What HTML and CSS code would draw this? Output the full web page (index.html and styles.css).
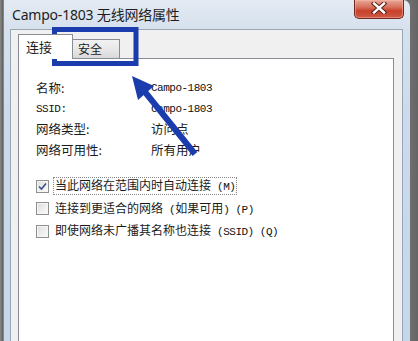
FILE: index.html
```html
<!DOCTYPE html>
<html lang="zh-CN">
<head>
<meta charset="utf-8">
<title>Campo-1803 无线网络属性</title>
<link rel="stylesheet" href="styles.css">
</head>
<body>
<div class="screen">
  <div class="window">
    <div class="titlebar">
      <span class="title">Campo-1803 无线网络属性</span>
      <div class="close">
        <svg width="16" height="12" viewBox="0 0 16 12">
          <path d="M3 1.5 L13 10.5 M13 1.5 L3 10.5" stroke="#5a2018" stroke-width="4.4" stroke-linecap="square" fill="none"/>
          <path d="M3 1.5 L13 10.5 M13 1.5 L3 10.5" stroke="#ffffff" stroke-width="2.4" stroke-linecap="square" fill="none"/>
        </svg>
      </div>
    </div>
    <div class="dialog">
      <div class="tabs">
        <div class="tab tab-active">连接</div>
        <div class="tab">安全</div>
      </div>
      <div class="panel">
        <div class="info">
          <span>名称:</span><span class="mono">Campo-1803</span>
          <span class="mono">SSID:</span><span class="mono">Campo-1803</span>
          <span>网络类型:</span><span>访问点</span>
          <span>网络可用性:</span><span>所有用户</span>
        </div>
        <div class="options">
          <div class="option">
            <span class="box box-checked">
              <svg width="9" height="9" viewBox="0 0 9 9"><path d="M1 4.5 L3.5 7 L8 1.5" stroke="#3b4f8a" stroke-width="1.6" fill="none"/></svg>
            </span>
            <span class="label label-focus">当此网络在范围内时自动连接<span class="mono"> (M)</span></span>
          </div>
          <div class="option">
            <span class="box"></span>
            <span class="label">连接到更适合的网络<span class="mono"> (</span>如果可用<span class="mono">) (P)</span></span>
          </div>
          <div class="option">
            <span class="box"></span>
            <span class="label">即使网络未广播其名称也连接<span class="mono"> (SSID) (Q)</span></span>
          </div>
        </div>
      </div>
    </div>
  </div>
  <svg class="annotation" width="418" height="341" viewBox="0 0 418 341">
    <rect x="54.5" y="29.5" width="81.5" height="34" fill="none" stroke="#1a3cad" stroke-width="5"/>
    <line x1="145" y1="92" x2="195" y2="154" stroke="#1a3cad" stroke-width="6"/>
    <polygon points="132,76 154,86 138,100" fill="#1a3cad"/>
  </svg>
</div>
</body>
</html>
```

FILE: styles.css
```css
* {
  box-sizing: border-box;
}

html, body {
  margin: 0;
  padding: 0;
}

body {
  font-family: "Noto Sans CJK SC", "Noto Sans", sans-serif;
  color: #1b1b1b;
  background: #6b6b6b;
}

.screen {
  position: relative;
  width: 418px;
  height: 341px;
  overflow: hidden;
  display: flex;
  padding-left: 3px;
  background: linear-gradient(90deg, #8a8a86 0, #5e5e5e 3px, #6e6e6e 410px, #656565 418px);
}

.window {
  width: 407px;
  height: 341px;
  display: flex;
  flex-direction: column;
  padding: 0 7px 0 6px;
  border-top-right-radius: 7px;
  border-left: 1px solid #7c8896;
  background: linear-gradient(180deg, #e3eaf2 0, #d6e1ee 30px, #cbdaec 120px, #c6d7ec 341px);
}

.titlebar {
  height: 29px;
  flex: none;
  display: flex;
  align-items: flex-start;
  justify-content: space-between;
}

.title {
  padding-left: 2px;
  margin-top: 5px;
  font-family: "Noto Sans", "Noto Sans CJK SC", sans-serif;
  font-size: 14px;
  line-height: 19px;
  color: #1e1e1e;
  letter-spacing: -0.2px;
}

.close {
  width: 50px;
  height: 19px;
  margin-right: -1px;
  display: flex;
  align-items: center;
  justify-content: center;
  border: 1px solid #6e2a20;
  border-top: none;
  border-radius: 0 0 5px 5px;
  background: linear-gradient(180deg, #e8a898 0, #d6705c 40%, #c8402b 60%, #cf5a45 100%);
  box-shadow: inset 0 0 0 1px rgba(255, 190, 170, 0.45);
}

.close svg {
  display: block;
  margin-top: -2px;
}

.dialog {
  flex: 1;
  display: flex;
  flex-direction: column;
  border: 1px solid #9aa6b4;
  border-bottom: none;
  background: #f0f0f0;
  padding: 4px 8px 0 7px;
}

.tabs {
  height: 24px;
  flex: none;
  display: flex;
  align-items: flex-end;
}

.tab {
  position: relative;
  height: 19px;
  width: 48px;
  margin-left: -1px;
  padding-left: 5px;
  border: 1px solid #898c95;
  border-bottom: none;
  background: linear-gradient(180deg, #f2f2f2 0, #e8e8e8 50%, #d9d9d9 100%);
  font-size: 12px;
  line-height: 18px;
}

.tab-active {
  z-index: 1;
  height: 25px;
  width: 55px;
  margin-left: 0;
  margin-bottom: -1px;
  padding-left: 7px;
  background: #ffffff;
  font-size: 13px;
  line-height: 24px;
}

.panel {
  flex: 1;
  border: 1px solid #898c95;
  border-bottom: none;
  background: #ffffff;
  padding: 19px 0 0 17px;
}

.info {
  display: grid;
  grid-template-columns: 115px auto;
  grid-auto-rows: 20.5px;
  align-items: center;
  font-size: 12.5px;
  line-height: 16px;
}

.mono {
  font-family: "Liberation Mono", "DejaVu Sans Mono", monospace;
  font-size: 11px;
  letter-spacing: -0.5px;
  color: #111111;
}

.options {
  margin-top: 15px;
  display: flex;
  flex-direction: column;
}

.option {
  height: 22.5px;
  display: flex;
  align-items: center;
  gap: 4px;
  font-size: 12px;
}

.box {
  width: 13px;
  height: 13px;
  flex: none;
  display: flex;
  align-items: center;
  justify-content: center;
  border: 1px solid #8e8f8f;
  background: linear-gradient(135deg, #dcdcdc 0, #f0f0f0 60%, #fafafa 100%);
  box-shadow: inset 0 0 0 1px #f6f6f6;
}

.label {
  padding: 0 1px;
  line-height: 14px;
  border: 1px dotted transparent;
}

.label-focus {
  border-color: #888888;
}

.annotation {
  position: absolute;
  left: 0;
  top: 0;
  pointer-events: none;
}
```
